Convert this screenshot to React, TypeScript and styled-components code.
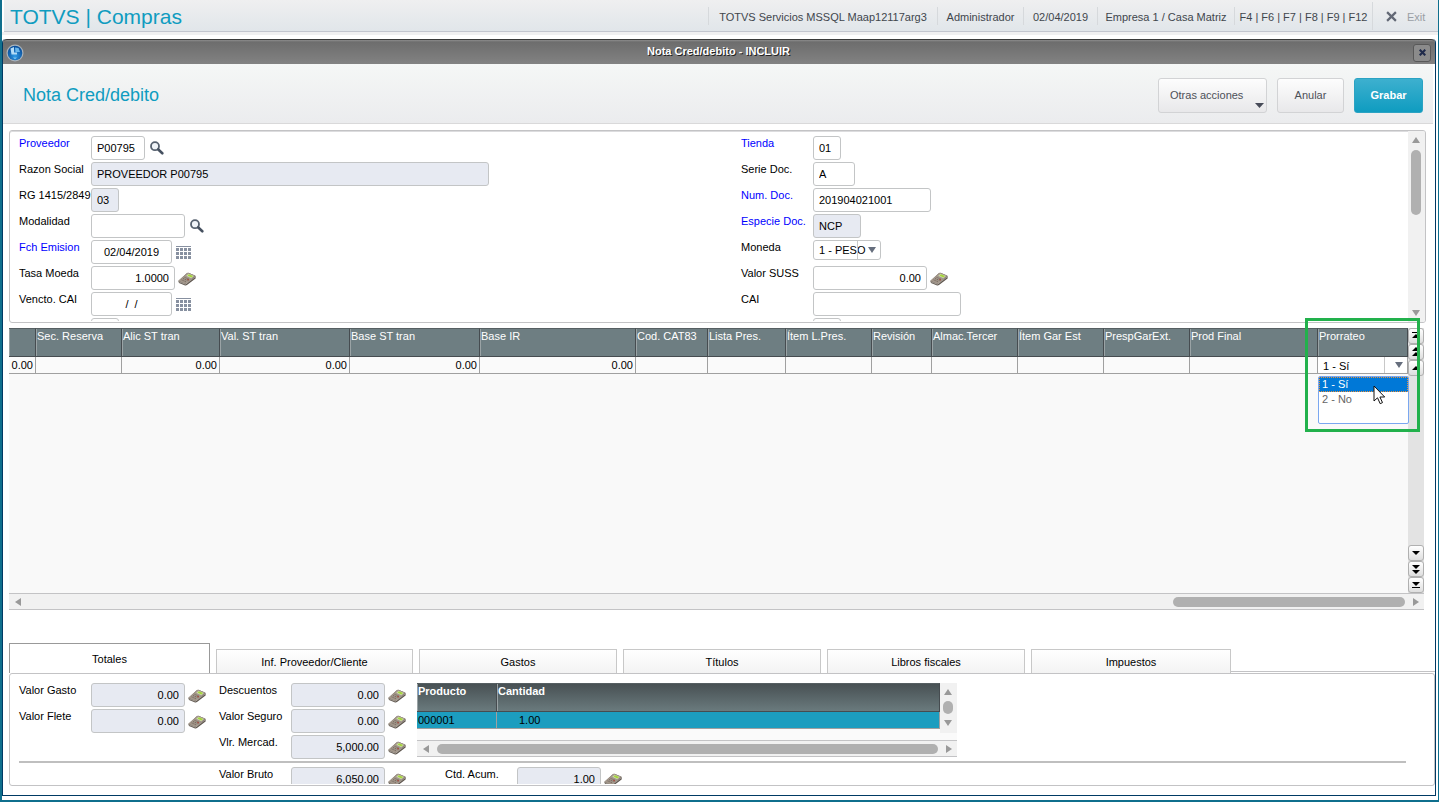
import React from 'react';
import styled, { createGlobalStyle, css } from 'styled-components';

const teal = '#0f9cc0';
const line = '#c3c3c5';

const GlobalStyle = createGlobalStyle`
  * { box-sizing: border-box; }
  html, body, #root { height: 100%; }
  body {
    margin: 0;
    font-family: "Liberation Sans", Arial, sans-serif;
    font-size: 11px;
    line-height: 14px;
    color: #000;
    background: #fff;
  }
  button, input, select { font: inherit; color: inherit; margin: 0; }
`;

const Shell = styled.div`
  display: flex;
  flex-direction: column;
  min-height: 100%;
  border: 0 solid #0f6f8d;
  border-width: 0 1px 2px 2px;
`;

const TopBar = styled.header`
  display: flex;
  align-items: center;
  height: 32px;
  margin-left: 2px;
  padding-left: 6px;
  border-bottom: 1px solid #c3c6cf;
  background: linear-gradient(#efeff0, #e1e6ea);
`;

const TopShade = styled.div`
  height: 3px;
  margin-bottom: 4px;
  background: #f0f0f1;
`;

const Brand = styled.h1`
  flex: 1;
  margin: 0;
  padding-top: 2px;
  font-size: 21px;
  line-height: 24px;
  font-weight: normal;
  color: ${teal};
`;

const TopItem = styled.span<{ $w: number }>`
  display: flex;
  align-items: center;
  justify-content: center;
  min-width: ${p => p.$w}px;
  height: 18px;
  padding-top: 2px;
  border-left: 1px solid #d6d9dc;
  color: #41464c;
  white-space: pre;
`;

const ExitButton = styled.button`
  display: flex;
  align-items: center;
  gap: 10px;
  width: 66px;
  height: 28px;
  padding: 2px 0 0 13px;
  border: 0;
  border-left: 1px solid #d6d9dc;
  background: none;
  color: #9a9fa5;
`;

const Window = styled.main`
  display: flex;
  flex-direction: column;
  flex: 1;
  margin: 0 2px 4px 0;
  border: 1px solid #003a64;
  border-top: 0;
  border-radius: 4px 4px 0 0;
`;

const TitleBar = styled.div`
  display: grid;
  grid-template-columns: 40px 1fr 40px;
  align-items: center;
  height: 25px;
  padding: 1px 4px 0 3px;
  border-top: 1px solid #3a3a3a;
  border-radius: 4px 4px 0 0;
  background: linear-gradient(#8c8c8c, #6d6d6d 2px, #828282);
`;

const TitleText = styled.h2`
  margin: 0 0 3px;
  font-size: 11px;
  line-height: 14px;
  font-weight: bold;
  text-align: center;
  color: #fff;
  text-shadow: 1px 1px 0 #222;
`;

const CloseButton = styled.button`
  display: flex;
  align-items: center;
  justify-content: center;
  justify-self: end;
  width: 18px;
  height: 18px;
  padding: 0;
  border: 1px solid #585858;
  border-radius: 3px;
  background: #8b8b8b;
`;

const Heading = styled.div`
  display: flex;
  align-items: center;
  gap: 10px;
  height: 60px;
  margin-right: 2px;
  padding: 3px 10px 0 20px;
  border-bottom: 1px solid #d9d9da;
  background: linear-gradient(#f5f7f6, #ebecee);
`;

const HeadingText = styled.h3`
  flex: 1;
  margin: 0;
  font-size: 18px;
  line-height: 22px;
  font-weight: normal;
  color: ${teal};
`;

const Action = styled.button<{ $primary?: boolean; $menu?: boolean; $w: number }>`
  display: flex;
  align-items: center;
  justify-content: ${p => (p.$menu ? 'space-between' : 'center')};
  width: ${p => p.$w}px;
  height: 35px;
  padding: ${p => (p.$menu ? '0 2px 0 11px' : '0')};
  border: 1px solid #d2d3d5;
  border-radius: 3px;
  color: #4d5058;
  background: linear-gradient(#fdfdfd, #e8e8ea);
  ${p =>
    p.$primary &&
    css`
      border-color: #2ba3c3;
      color: #fff;
      font-weight: bold;
      background: linear-gradient(#3db0cf, #0f9cc0);
    `}
  svg { align-self: flex-end; margin-bottom: 4px; }
`;

const FormPanel = styled.section`
  display: flex;
  height: 193px;
  margin: 6px 9px 5px 6px;
  border: 1px solid ${line};
  border-radius: 3px;
  box-shadow: inset 0 1px 0 #dcdcde;
  overflow: hidden;
`;

const FormBody = styled.div`
  display: grid;
  grid-template-columns: 722px 1fr;
  flex: 1;
  margin-bottom: 1px;
  padding: 5px 0 0 9px;
  overflow: hidden;
`;

const Column = styled.div`
  display: flex;
  flex-direction: column;
  gap: 2px;
`;

const Row = styled.div`
  display: flex;
  flex: none;
  height: 24px;
`;

const Label = styled.label<{ $required?: boolean }>`
  width: 72px;
  white-space: nowrap;
  color: ${p => (p.$required ? '#0000ff' : '#000')};
`;

const Box = styled.input<{ $w: number }>`
  width: ${p => p.$w}px;
  height: 24px;
  padding: 0 5px 1px;
  border: 1px solid #c3c5c6;
  border-radius: 3px;
  outline: 0;
  text-align: ${p => p.align ?? 'left'};
  background: ${p => (p.readOnly ? '#e7eaf2' : '#fff')};
`;

const IconButton = styled.button<{ $gap: number }>`
  display: flex;
  align-items: center;
  justify-content: center;
  height: 24px;
  margin-left: ${p => p.$gap}px;
  padding: 2px 0 0;
  border: 0;
  background: none;
`;

const SelectWrap = styled.div<{ $cell?: boolean }>`
  display: flex;
  align-items: center;
  position: relative;
  width: ${p => (p.$cell ? 'auto' : '68px')};
  height: ${p => (p.$cell ? 16 : 20)}px;
  border: ${p => (p.$cell ? '0' : '1px solid #c3c5c6')};
  border-radius: 3px;
  background: #fff;
  select {
    appearance: none;
    width: 100%;
    height: 100%;
    padding: ${p => (p.$cell ? '2px 16px 0 5px' : '0 12px 0 5px')};
    border: 0;
    outline: 0;
    background: none;
  }
  svg { position: absolute; right: 4px; pointer-events: none; }
  &::after {
    content: '';
    position: absolute;
    top: 0;
    bottom: 0;
    right: 22px;
    border-left: 1px solid #c8c8c8;
  }
`;

const VBar = styled.div`
  display: flex;
  flex-direction: column;
  align-items: center;
  flex: none;
  width: 17px;
  padding: 5px 2px 5px 0;
  background: #f1f1f1;
`;

const ThumbGap = styled.div`
  flex: none;
  height: 6px;
`;

const Thumb = styled.div<{ $w: number; $h: number }>`
  flex: none;
  width: ${p => p.$w}px;
  height: ${p => p.$h}px;
  border-radius: 5px;
  background: #b0b0b0;
`;

const Spacer = styled.div`
  flex: 1;
`;

const GridWrap = styled.section`
  position: relative;
  display: flex;
  flex-direction: column;
  flex: 1;
  min-height: 282px;
  margin: 0 11px 33px 6px;
`;

const GridMain = styled.div`
  display: flex;
  flex: 1;
  background: #f9f9f9;
`;

const TableHolder = styled.div`
  flex: 1;
  overflow: hidden;
`;

const Table = styled.table`
  width: 100%;
  table-layout: fixed;
  border-collapse: separate;
  border-spacing: 0;
  th {
    height: 29px;
    padding: 0 0 0 1px;
    overflow: hidden;
    border-top: 1px solid #565f62;
    border-bottom: 1px solid #464c50;
    border-right: 1px solid #464c50;
    box-shadow: inset 1px 0 0 #9aa3a5;
    font-weight: normal;
    text-align: left;
    vertical-align: top;
    white-space: nowrap;
    color: #fff;
    background: #6e7e82;
  }
  td {
    height: 17px;
    padding: 0 2px 0 0;
    border-right: 1px solid #a0a0a0;
    border-bottom: 1px solid #a0a0a0;
    text-align: right;
    background: #fafafa;
  }
  td:has(select) { padding: 0; }
`;

const Stepper = styled.div`
  display: flex;
  flex-direction: column;
  width: 16px;
  background: #e3e3e3;
`;

const StepButton = styled.button`
  display: flex;
  align-items: center;
  justify-content: center;
  width: 16px;
  height: 16px;
  padding: 0;
  border: 1px solid #b0b0b0;
  border-radius: 3px;
  background: linear-gradient(#fff, #dedede);
`;

const HBar = styled.div`
  display: flex;
  align-items: center;
  gap: 7px;
  height: 17px;
  padding: 0 4px 0 5px;
  border: 1px solid ${line};
  border-width: 1px 0;
  background: #f1f1f1;
`;

const Highlight = styled.div`
  position: absolute;
  top: -10px;
  right: 4px;
  z-index: 3;
  width: 115px;
  height: 114px;
  border: 3px solid #22b14c;
  pointer-events: none;
`;

const Popup = styled.ul`
  position: absolute;
  top: 48px;
  right: 15px;
  z-index: 2;
  width: 91px;
  height: 48px;
  margin: 0;
  padding: 0;
  list-style: none;
  border: 1px solid #7aa7f0;
  border-radius: 2px;
  background: #fff;
`;

const Option = styled.li<{ $active?: boolean }>`
  height: 15px;
  padding-left: 2px;
  border: 1px dotted ${p => (p.$active ? '#e8923c' : 'transparent')};
  line-height: 13px;
  color: ${p => (p.$active ? '#fff' : '#666')};
  background: ${p => (p.$active ? '#0078d7' : 'none')};
`;

const Pointer = styled.svg`
  position: absolute;
  top: 57px;
  right: 38px;
  z-index: 4;
`;

const TabStrip = styled.div`
  display: flex;
  align-items: flex-end;
  gap: 6px;
  height: 30px;
  margin-left: 6px;
`;

const Tab = styled.button<{ $w: number; $active?: boolean }>`
  width: ${p => p.$w}px;
  height: ${p => (p.$active ? 30 : 24)}px;
  padding: 0;
  border: 1px solid ${p => (p.$active ? '#999' : '#c8c8c8')};
  border-bottom: 0;
  background: ${p => (p.$active ? '#fff' : 'linear-gradient(#fff, #f3f3f3)')};
`;

const TabRest = styled.div`
  flex: 1;
  height: 2px;
  margin-left: -6px;
  border-top: 1px solid ${line};
`;

const Totals = styled.section`
  height: 113px;
  margin: 0 0 9px 6px;
  padding: 9px 0 0 9px;
  border: 1px solid ${line};
  border-radius: 3px;
  overflow: hidden;
`;

const TotalsTop = styled.div`
  display: flex;
  height: 78px;
`;

const TotalsColumn = styled(Column)<{ $w: number }>`
  width: ${p => p.$w}px;
`;

const Divider = styled.hr`
  height: 2px;
  margin: 0 28px 4px 0;
  border: 0;
  background: #bfbfbf;
`;

const TotalsBottom = styled.div`
  display: flex;
  height: 17px;
  padding-left: 200px;
  overflow: hidden;
`;

const Mini = styled.div`
  width: 540px;
  height: 74px;
`;

const MiniTop = styled.div`
  display: flex;
  align-items: flex-start;
  height: 57px;
  background: #fafafa;
`;

const MiniTable = styled(Table)`
  width: 523px;
  th {
    font-weight: bold;
    background: linear-gradient(#485154, #6a7a7d);
  }
  td {
    text-align: left;
    padding-left: 1px;
    background: #1c9dbf;
  }
  td + td { padding-left: 22px; }
`;

const MiniVBar = styled(VBar)`
  height: 50px;
  gap: 5px;
`;

type Dir = 'up' | 'down' | 'left' | 'right';
const arrows: Record<Dir, string> = {
  up: 'M0 7L4 1L8 7Z',
  down: 'M0 1L8 1L4 7Z',
  left: 'M7 0L7 8L1 4Z',
  right: 'M1 0L7 4L1 8Z',
};
const Arrow = ({ dir, color = '#999' }: { dir: Dir; color?: string }) => (
  <svg width="8" height="8" viewBox="0 0 8 8" aria-hidden="true">
    <path d={arrows[dir]} fill={color} />
  </svg>
);

const Caret = () => (
  <svg width="9" height="5" viewBox="0 0 9 5" aria-hidden="true">
    <path d="M0 0H9L4.500 5Z" fill="#474b58" />
  </svg>
);

const Cross = ({ size, color, weight }: { size: number; color: string; weight: number }) => (
  <svg width={size} height={size} viewBox="0 0 10 10" aria-hidden="true">
    <path d="M1 1L9 9M9 1L1 9" stroke={color} strokeWidth={weight} />
  </svg>
);

const Globe = () => (
  <svg width="18" height="18" viewBox="0 0 18 18" aria-hidden="true">
    <defs>
      <radialGradient id="globe" cx="0.5" cy="0.7" r="0.6">
        <stop offset="0" stopColor="#2f9be6" />
        <stop offset="1" stopColor="#0a4f9c" />
      </radialGradient>
    </defs>
    <circle cx="9" cy="9" r="8.500" fill="#a9b3bb" />
    <circle cx="9" cy="9" r="7.300" fill="url(#globe)" />
    <path d="M4.500 4.500L8 3V8.500H11V10.500H5.500Z" fill="#b4dcf6" />
    <path d="M9 3.500L12.500 4L14 8H9.500Z" fill="#6ab6ea" />
    <path d="M7 13.500H11L9 15.200Z" fill="#7cc8f6" />
  </svg>
);

const Magnifier = () => (
  <svg width="14" height="16" viewBox="0 0 14 16" aria-hidden="true">
    <circle cx="5" cy="5.200" r="4" fill="#f0f4f8" stroke="#56616f" strokeWidth="1.800" />
    <path d="M8.300 8.500L12.300 12.300" stroke="#465160" strokeWidth="2.600" strokeLinecap="round" />
  </svg>
);

const CalendarGrid = () => (
  <svg width="15" height="14" viewBox="0 0 15 14" aria-hidden="true">
    <path d="M0 0.500H15" stroke="#8790a0" />
    {[2, 6, 10].map(y => (
      <path key={y} d={`M0 ${y + 1.5}H15`} stroke="#8790a0" strokeWidth="3" strokeDasharray="3 1" />
    ))}
  </svg>
);

const Calculator = () => (
  <svg width="18" height="14" viewBox="0 0 18 14" aria-hidden="true">
    <path d="M0.300 9L8.500 1.500Q9.500 0.500 11 1L17 3.500Q18 4 17.600 6.500L9 13Q8 13.700 6.500 13.200L1 11Z" fill="#5f574f" />
    <path d="M0.300 8.700L8.500 1.500Q9.500 0.500 11 1L17.500 3.800L8.500 11.500Q7.500 12 6.500 11.600Z" fill="#a3978b" />
    <path d="M8.200 3.800L10.500 1.700L15.800 3.900L13.300 6.200Z" fill="#cfdcae" />
    <path d="M9.500 3.600L11 2.300L15 4L13.300 5.500Z" fill="#a5d53c" />
    <path d="M3.500 7.800L8 9.800M5 6.500L9.500 8.500M6.500 5.300L11 7.200" stroke="#766a60" strokeDasharray="1.300 0.700" />
    <path d="M9.300 7.300L11 8.100" stroke="#a8382e" />
    <path d="M0.800 9.700L7.500 12.300L17 5" stroke="#c9c2ba" strokeWidth="0.600" fill="none" />
  </svg>
);

const stepShapes = {
  first: 'M3 3H11V4H3ZM7 5L11 9H3Z',
  pageUp: 'M7 2L11 6H3ZM7 7L11 11H3Z',
  up: 'M7 5L11 9H3Z',
  down: 'M3 5H11L7 9Z',
  pageDown: 'M3 3H11L7 7ZM3 8H11L7 12Z',
  last: 'M3 4H11L7 8ZM3 9H11V10H3Z',
};
const Step = ({ kind, name }: { kind: keyof typeof stepShapes; name: string }) => (
  <StepButton type="button" aria-label={name}>
    <svg width="14" height="14" viewBox="0 0 14 14" aria-hidden="true">
      <path d={stepShapes[kind]} />
    </svg>
  </StepButton>
);

type Kind = 'search' | 'date' | 'calc';
const icons: Record<Kind, { name: string; gap: number; node: React.ReactNode }> = {
  search: { name: 'Buscar', gap: 5, node: <Magnifier /> },
  date: { name: 'Calendario', gap: 4, node: <CalendarGrid /> },
  calc: { name: 'Calculadora', gap: 3, node: <Calculator /> },
};

interface FieldProps {
  id: string;
  label?: string;
  value?: string;
  w: number;
  required?: boolean;
  locked?: boolean;
  align?: 'left' | 'center' | 'right';
  icon?: Kind;
}
const Field = ({ id, label = '', value = '', w, required, locked, align, icon }: FieldProps) => (
  <Row>
    <Label htmlFor={id} $required={required}>{label}</Label>
    <Box id={id} $w={w} align={align} readOnly={locked} defaultValue={value} />
    {icon && (
      <IconButton type="button" $gap={icons[icon].gap} aria-label={icons[icon].name}>
        {icons[icon].node}
      </IconButton>
    )}
  </Row>
);

const leftFields: FieldProps[] = [
  { id: 'proveedor', label: 'Proveedor', value: 'P00795', w: 54, required: true, icon: 'search' },
  { id: 'razon', label: 'Razon Social', value: 'PROVEEDOR P00795', w: 398, locked: true },
  { id: 'rg', label: 'RG 1415/2849', value: '03', w: 28, locked: true },
  { id: 'modalidad', label: 'Modalidad', w: 94, icon: 'search' },
  { id: 'emision', label: 'Fch Emision', value: '02/04/2019', w: 81, required: true, align: 'center', icon: 'date' },
  { id: 'tasa', label: 'Tasa Moeda', value: '1.0000', w: 84, align: 'right', icon: 'calc' },
  { id: 'vencto', label: 'Vencto. CAI', value: '/  /', w: 81, align: 'center', icon: 'date' },
  { id: 'extra1', w: 28 },
];
const rightTop: FieldProps[] = [
  { id: 'tienda', label: 'Tienda', value: '01', w: 28, required: true },
  { id: 'serie', label: 'Serie Doc.', value: 'A', w: 42 },
  { id: 'num', label: 'Num. Doc.', value: '201904021001', w: 118, required: true },
  { id: 'especie', label: 'Especie Doc.', value: 'NCP', w: 48, required: true, locked: true },
];
const rightBottom: FieldProps[] = [
  { id: 'suss', label: 'Valor SUSS', value: '0.00', w: 114, align: 'right', icon: 'calc' },
  { id: 'cai', label: 'CAI', w: 148 },
  { id: 'extra2', w: 28 },
];

const columns: { title: string; w?: number; value?: string }[] = [
  { title: '', w: 27, value: '0.00' },
  { title: 'Sec. Reserva', w: 86 },
  { title: 'Alic ST tran', w: 98, value: '0.00' },
  { title: 'Val. ST tran', w: 130, value: '0.00' },
  { title: 'Base ST tran', w: 130, value: '0.00' },
  { title: 'Base IR', w: 156, value: '0.00' },
  { title: 'Cod. CAT83', w: 72 },
  { title: 'Lista Pres.', w: 78 },
  { title: 'Ítem L.Pres.', w: 86 },
  { title: 'Revisión', w: 60 },
  { title: 'Almac.Tercer', w: 86 },
  { title: 'Ítem Gar Est', w: 86 },
  { title: 'PrespGarExt.', w: 86 },
  { title: 'Prod Final' },
];

const tabs = [
  { title: 'Totales', w: 201 },
  { title: 'Inf. Proveedor/Cliente', w: 197 },
  { title: 'Gastos', w: 198 },
  { title: 'Títulos', w: 198 },
  { title: 'Libros fiscales', w: 198 },
  { title: 'Impuestos', w: 200 },
];

const total = (id: string, label: string, value: string, w = 94) => (
  <Field key={id} id={id} label={label} value={value} w={w} locked align="right" icon="calc" />
);

export default function App() {
  return (
    <Shell>
      <GlobalStyle />
      <TopBar>
        <Brand>TOTVS | Compras</Brand>
        <TopItem $w={229}>TOTVS Servicios MSSQL Maap12117arg3</TopItem>
        <TopItem $w={86}>Administrador</TopItem>
        <TopItem $w={74}>02/04/2019</TopItem>
        <TopItem $w={137}>Empresa 1 / Casa Matriz</TopItem>
        <TopItem $w={138}>F4 | F6 | F7 | F8 | F9 | F12</TopItem>
        <ExitButton type="button">
          <Cross size={11} color="#626875" weight={2} />
          Exit
        </ExitButton>
      </TopBar>
      <TopShade />
      <Window>
        <TitleBar>
          <Globe />
          <TitleText>Nota Cred/debito - INCLUIR</TitleText>
          <CloseButton type="button" aria-label="Cerrar">
            <Cross size={7} color="#1f2a4a" weight={3} />
          </CloseButton>
        </TitleBar>
        <Heading>
          <HeadingText>Nota Cred/debito</HeadingText>
          <Action type="button" $menu $w={109}>Otras acciones<Caret /></Action>
          <Action type="button" $w={67}>Anular</Action>
          <Action type="button" $primary $w={69}>Grabar</Action>
        </Heading>

        <FormPanel>
          <FormBody>
            <Column>{leftFields.map(f => <Field key={f.id} {...f} />)}</Column>
            <Column>
              {rightTop.map(f => <Field key={f.id} {...f} />)}
              <Row>
                <Label htmlFor="moneda">Moneda</Label>
                <SelectWrap>
                  <select id="moneda"><option>1 - PESO</option></select>
                  <Arrow dir="down" color="#666e7d" />
                </SelectWrap>
              </Row>
              {rightBottom.map(f => <Field key={f.id} {...f} />)}
            </Column>
          </FormBody>
          <VBar>
            <Arrow dir="up" />
            <ThumbGap />
            <Thumb $w={10} $h={65} />
            <Spacer />
            <Arrow dir="down" />
          </VBar>
        </FormPanel>

        <GridWrap>
          <GridMain>
            <TableHolder>
              <Table>
                <colgroup>
                  {columns.map((c, i) => <col key={i} width={c.w} />)}
                  <col width={90} />
                </colgroup>
                <thead>
                  <tr>
                    {columns.map((c, i) => <th key={i}>{c.title}</th>)}
                    <th>Prorrateo</th>
                  </tr>
                </thead>
                <tbody>
                  <tr>
                    {columns.map((c, i) => <td key={i}>{c.value}</td>)}
                    <td>
                      <SelectWrap $cell>
                        <select aria-label="Prorrateo"><option>1 - Sí</option></select>
                        <Arrow dir="down" color="#666e7d" />
                      </SelectWrap>
                    </td>
                  </tr>
                </tbody>
              </Table>
            </TableHolder>
            <Stepper>
              <Step kind="first" name="Primero" />
              <Step kind="pageUp" name="Página anterior" />
              <Step kind="up" name="Anterior" />
              <Spacer />
              <Step kind="down" name="Siguiente" />
              <Step kind="pageDown" name="Página siguiente" />
              <Step kind="last" name="Último" />
            </Stepper>
          </GridMain>
          <HBar>
            <Arrow dir="left" />
            <Spacer />
            <Thumb $w={232} $h={10} />
            <Arrow dir="right" />
          </HBar>
          <Popup>
            <Option $active>1 - Sí</Option>
            <Option>2 - No</Option>
          </Popup>
          <Highlight />
          <Pointer width="13" height="20" viewBox="0 0 13 20" aria-hidden="true">
            <path d="M1 1V16L4.500 12.800L7.200 18.700L9.500 17.600L6.900 12H11.700Z" fill="#fff" stroke="#111" />
          </Pointer>
        </GridWrap>

        <TabStrip>
          {tabs.map((t, i) => (
            <Tab key={t.title} type="button" $w={t.w} $active={i === 0}>{t.title}</Tab>
          ))}
          <TabRest />
        </TabStrip>
        <Totals>
          <TotalsTop>
            <TotalsColumn $w={200}>
              {total('gasto', 'Valor Gasto', '0.00')}
              {total('flete', 'Valor Flete', '0.00')}
            </TotalsColumn>
            <TotalsColumn $w={198}>
              {total('desc', 'Descuentos', '0.00')}
              {total('seguro', 'Valor Seguro', '0.00')}
              {total('mercad', 'Vlr. Mercad.', '5,000.00')}
            </TotalsColumn>
            <Mini>
              <MiniTop>
                <MiniTable>
                  <colgroup><col width={80} /><col /></colgroup>
                  <thead><tr><th>Producto</th><th>Cantidad</th></tr></thead>
                  <tbody><tr><td>000001</td><td>1.00</td></tr></tbody>
                </MiniTable>
                <MiniVBar>
                  <Arrow dir="up" />
                  <Thumb $w={10} $h={13} />
                  <Arrow dir="down" />
                </MiniVBar>
              </MiniTop>
              <HBar>
                <Arrow dir="left" />
                <Thumb $w={501} $h={10} />
                <Arrow dir="right" />
              </HBar>
            </Mini>
          </TotalsTop>
          <Divider />
          <TotalsBottom>
            <TotalsColumn $w={226}>{total('bruto', 'Valor Bruto', '6,050.00')}</TotalsColumn>
            {total('acum', 'Ctd. Acum.', '1.00', 84)}
          </TotalsBottom>
        </Totals>
      </Window>
    </Shell>
  );
}
